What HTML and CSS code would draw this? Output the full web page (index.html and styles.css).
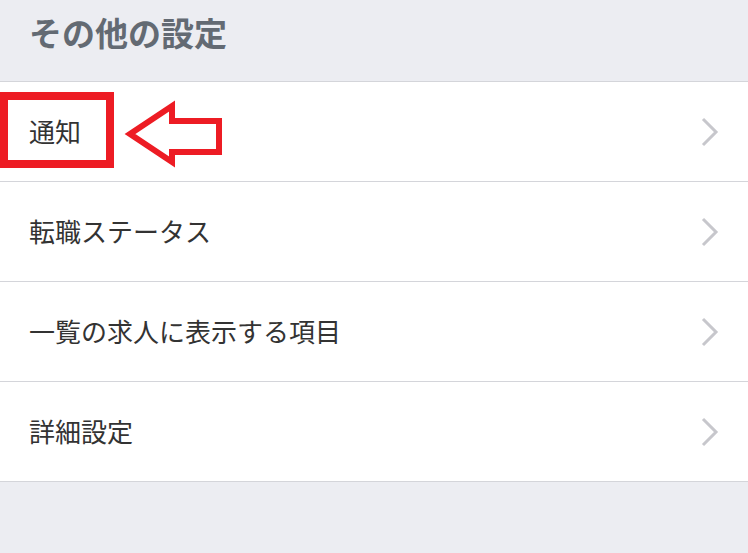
FILE: index.html
```html
<!DOCTYPE html>
<html lang="ja">
<head>
    <meta charset="UTF-8">
    <meta name="viewport" content="width=device-width, initial-scale=1.0">
    <title>その他の設定</title>
    <link rel="stylesheet" href="styles.css">
</head>
<body>
    <div class="section-header">その他の設定</div>
    <ul class="settings-list">
        <li class="settings-item highlight">
            <span class="item-label">通知</span>
            <svg class="chevron" width="18" height="30" viewBox="0 0 18 30"><polyline points="2,2 15,15 2,28" fill="none" stroke="#c7c7cc" stroke-width="3"/></svg>
            <div class="mark-box"></div>
            <svg class="mark-arrow" width="110" height="75" viewBox="0 0 110 75">
                <polygon points="10,39 52,11 52,26 99,26 99,57 52,57 52,67" fill="none" stroke="#ed1c24" stroke-width="6" stroke-linejoin="miter"/>
            </svg>
        </li>
        <li class="settings-item">
            <span class="item-label">転職ステータス</span>
            <svg class="chevron" width="18" height="30" viewBox="0 0 18 30"><polyline points="2,2 15,15 2,28" fill="none" stroke="#c7c7cc" stroke-width="3"/></svg>
        </li>
        <li class="settings-item">
            <span class="item-label">一覧の求人に表示する項目</span>
            <svg class="chevron" width="18" height="30" viewBox="0 0 18 30"><polyline points="2,2 15,15 2,28" fill="none" stroke="#c7c7cc" stroke-width="3"/></svg>
        </li>
        <li class="settings-item">
            <span class="item-label">詳細設定</span>
            <svg class="chevron" width="18" height="30" viewBox="0 0 18 30"><polyline points="2,2 15,15 2,28" fill="none" stroke="#c7c7cc" stroke-width="3"/></svg>
        </li>
    </ul>
</body>
</html>
```

FILE: styles.css
```css
body {
    margin: 0;
    background-color: #ecedf2;
    font-family: "Noto Sans CJK JP", "Noto Sans", sans-serif;
    height: 553px;
    overflow: hidden;
}
.section-header {
    height: 82px;
    box-sizing: border-box;
    padding: 10px 0 0 29px;
    font-size: 33px;
    font-weight: bold;
    color: #636a73;
    line-height: 44px;
    border-bottom: 1px solid #d4d5da;
}
.settings-list {
    list-style: none;
    margin: 0;
    padding: 0;
    background: #fff;
}
.settings-item {
    position: relative;
    display: flex;
    align-items: center;
    justify-content: space-between;
    height: 99px;
    padding: 0 29px 0 29px;
    border-bottom: 1px solid #d4d5da;
}
.item-label {
    font-size: 26px;
    color: #333;
    padding-bottom: 2px;
}
.chevron {
    display: block;
}
.mark-box {
    position: absolute;
    left: 0;
    top: 10px;
    width: 98px;
    height: 60px;
    border: 8px solid #ed1c24;
}
.mark-arrow {
    position: absolute;
    left: 120px;
    top: 13px;
}
```
